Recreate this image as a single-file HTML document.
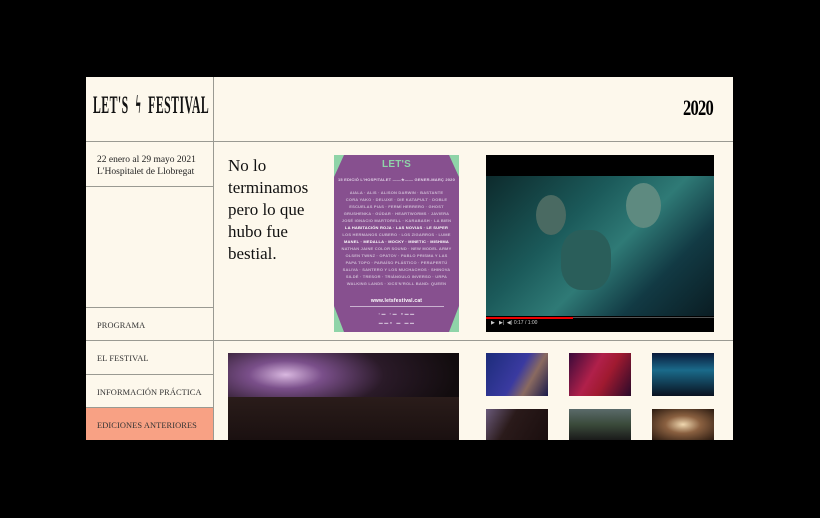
<!DOCTYPE html>
<html><head><meta charset="utf-8"><style>
*{margin:0;padding:0;box-sizing:border-box}
body{width:820px;height:518px;background:#000;position:relative;overflow:hidden;font-family:"Liberation Serif",serif}
.card{position:absolute;left:86px;top:77px;width:647px;height:363px;background:#fdf8ec;overflow:hidden}
.a{position:absolute}
.hl{position:absolute;height:1px;background:#9a9a92}
.vl{position:absolute;width:1px;background:#9a9a92}
.logo{left:7px;top:15px;font-family:"Liberation Serif",serif;font-size:25px;font-weight:bold;transform:scaleX(.47);transform-origin:left;letter-spacing:1px;white-space:nowrap;color:#111}
.nav{left:0;width:127px;height:33px;font-size:8.4px;color:#333;padding:13px 0 0 11px;letter-spacing:.1px}
.p{position:absolute;left:248px;top:78px;width:125px;height:177px;background:#87508f;overflow:hidden}
.p .t{position:absolute;left:0;width:125px;text-align:center;font-family:"Liberation Sans",sans-serif;font-size:4px;color:#cdb8d3;white-space:nowrap;font-weight:bold;letter-spacing:.2px;overflow:hidden}
.vid{left:400px;top:78px;width:228px;height:177px;background:#000}
.th{position:absolute;width:62px}
</style></head><body>
<div class="card">
<div class="hl" style="left:0;top:64px;width:647px"></div>
<div class="vl" style="left:127px;top:0;height:363px"></div>
<div class="hl" style="left:0;top:109px;width:127px"></div>
<div class="hl" style="left:0;top:230px;width:127px"></div>
<div class="hl" style="left:0;top:263px;width:647px"></div>
<div class="hl" style="left:0;top:297px;width:127px"></div>
<div class="hl" style="left:0;top:330px;width:127px"></div>
<div class="a logo">LET'S&nbsp; ϟ &nbsp;FESTIVAL</div>
<div class="a" style="left:597px;top:18px;font-size:22px;font-weight:bold;transform:scaleX(.75);transform-origin:left;letter-spacing:-1px">2020</div>
<div class="a" style="left:11px;top:77px;font-size:9.5px;line-height:12px;color:#222">22 enero al 29 mayo 2021<br>L'Hospitalet de Llobregat</div>
<div class="a nav" style="top:231px">PROGRAMA</div>
<div class="a nav" style="top:264px">EL FESTIVAL</div>
<div class="a nav" style="top:298px">INFORMACIÓN PRÁCTICA</div>
<div class="a nav" style="top:331px;background:#f8a184">EDICIONES ANTERIORES</div>
<div class="a" style="left:142px;top:78px;font-size:17px;line-height:22px;color:#111">No lo<br>terminamos<br>pero lo que<br>hubo fue<br>bestial.</div>
<div class="p">
<div class="a" style="left:0;top:0;width:0;height:0;border-left:10px solid #8fd4a8;border-bottom:22px solid transparent"></div>
<div class="a" style="right:0;top:0;width:0;height:0;border-right:10px solid #8fd4a8;border-bottom:22px solid transparent"></div>
<div class="a" style="left:0;bottom:0;width:0;height:0;border-left:10px solid #8fd4a8;border-top:26px solid transparent"></div>
<div class="a" style="right:0;bottom:0;width:0;height:0;border-right:10px solid #8fd4a8;border-top:26px solid transparent"></div>
<div class="t" style="top:4px;font-size:10px;color:#8fd4a8">LET'S</div>
<div class="t" style="top:22px;color:#e0d0e6">15 EDICIÓ L'HOSPITALET ——★—— GENER-MARÇ 2020</div>
<div class="t" style="top:35px">AIALA · ALIS · ALISON DARWIN · BASTANTE</div>
<div class="t" style="top:42px">CORA YAKO · DELUXE · DIE KATAPULT · DOBLE</div>
<div class="t" style="top:49px">ESCUELAS PIAS · FERMÍ HERRERO · GHOST</div>
<div class="t" style="top:56px">GRUSHENKA · GÚDAR · HEARTWORMS · JAVIERA</div>
<div class="t" style="top:63px">JOSÉ IGNACIO MARTORELL · KARABASH · LA BIEN</div>
<div class="t" style="top:70px;color:#fff">LA HABITACIÓN ROJA · LAS NOVIAS · LE SUPER</div>
<div class="t" style="top:77px">LOS HERMANOS CUBERO · LOS ZIGARROS · LUME</div>
<div class="t" style="top:84px;color:#fff">MANEL · MEDALLA · MOCKY · MINETIC · MISHIMA</div>
<div class="t" style="top:91px">NATHAN JAINE COLOR SOUND · NEW MODEL ARMY</div>
<div class="t" style="top:98px">OLSEN TWINZ · OPATOV · PABLO PRISMA Y LAS</div>
<div class="t" style="top:105px">PAPA TOPO · PARAÍSO PLÁSTICO · PERAPERTÚ</div>
<div class="t" style="top:112px">SALIVA · SANTERO Y LOS MUCHACHOS · SHINOVA</div>
<div class="t" style="top:119px">SILDÉ · TRESOR · TRIÁNGULO INVERSO · URPA</div>
<div class="t" style="top:126px">WALKING LANDS · XICS'N'ROLL BAND: QUEEN</div>
<div class="t" style="top:143px;color:#fff;font-size:5px">www.letsfestival.cat</div>
<div class="a" style="left:16px;top:151px;width:94px;height:1px;background:#c9b2d0"></div>
<div class="t" style="top:156px">▪ ▬ &nbsp; ▪ ▬ &nbsp; ● ▬ ▬</div>
<div class="t" style="top:165px">▬ ▬ ● &nbsp; ▬ &nbsp; ▬ ▬</div>
</div>
<div class="a vid">
<div class="a" style="left:0;top:21px;width:228px;height:140px;background:linear-gradient(135deg,#0d2a2c 0%,#1b5a5a 35%,#2f7a76 55%,#123a44 75%,#0a1c22 100%)"></div>
<div class="a" style="left:50px;top:40px;width:30px;height:40px;border-radius:50%;background:#4a6a62"></div>
<div class="a" style="left:140px;top:28px;width:35px;height:45px;border-radius:50%;background:#5e8a80"></div>
<div class="a" style="left:75px;top:75px;width:50px;height:60px;border-radius:40%;background:#2a5e5a"></div>
<div class="a" style="left:0;top:162px;width:87px;height:2px;background:#e00"></div>
<div class="a" style="left:87px;top:162px;width:141px;height:1px;background:#555"></div>
<div class="a" style="left:5px;top:165px;font-family:'Liberation Sans',sans-serif;font-size:5px;color:#ccc;white-space:nowrap">▶ &nbsp; ▶| &nbsp;◀) 0:17 / 1:00</div>
</div>
<div class="a" style="left:142px;top:276px;width:231px;height:87px;background:radial-gradient(ellipse at 25% 25%,#d9b8e0 0%,#7a4f8a 15%,#2a1a28 40%,#120c0e 70%)"></div>
<div class="a" style="left:142px;top:320px;width:231px;height:43px;background:linear-gradient(#2a1c1a,#1a1010)"></div>
<div class="th" style="left:400px;top:276px;height:43px;background:linear-gradient(120deg,#1c2c7a,#3a3aa0 50%,#8a6a60 70%,#1a1a4a)"></div>
<div class="th" style="left:483px;top:276px;height:43px;background:linear-gradient(120deg,#3a0a3a,#b0204a 40%,#a01a30 60%,#2a0a2a)"></div>
<div class="th" style="left:566px;top:276px;height:43px;background:linear-gradient(#0a1a3a,#1a6a8a 40%,#0a1220)"></div>
<div class="th" style="left:400px;top:332px;height:31px;background:linear-gradient(120deg,#6a5a7a,#2a1a1a 40%,#1a0e0e)"></div>
<div class="th" style="left:483px;top:332px;height:31px;background:linear-gradient(#5a6a6a,#3a4a3a 50%,#1a1a1a)"></div>
<div class="th" style="left:566px;top:332px;height:31px;background:radial-gradient(ellipse at 50% 50%,#f0d8b0,#8a6040 40%,#2a1a10)"></div>
</div>
</body></html>
